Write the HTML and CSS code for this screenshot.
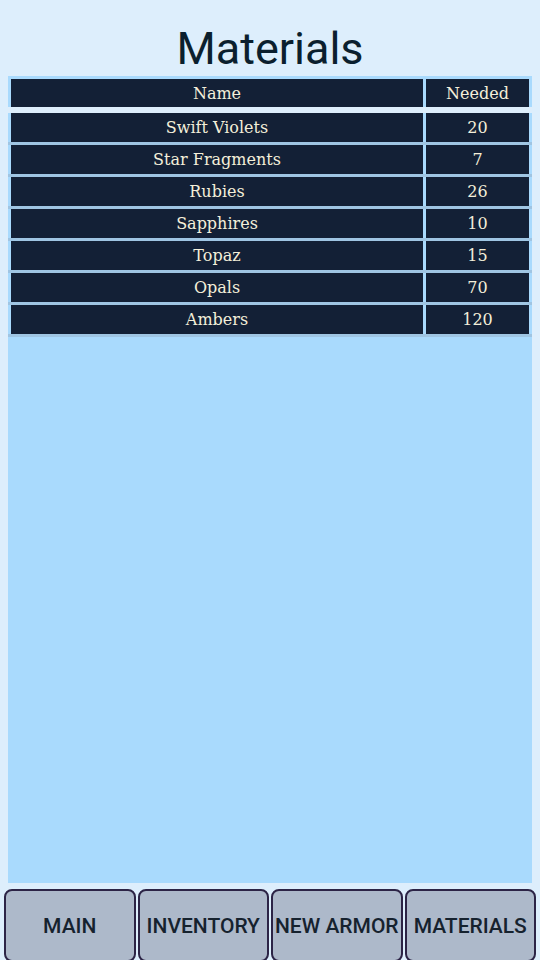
FILE: index.html
```html
<!DOCTYPE html>
<html lang="en">
<head>
    <meta charset="UTF-8">
    <meta name="viewport" content="width=device-width, initial-scale=1.0">
    <title>Materials</title>
    <link rel="stylesheet" href="styles.css">
</head>
<body>
    <div class="app">
        <h1 class="title">Materials</h1>
        <div class="table-head">
            <div class="cell">Name</div>
            <div class="cell">Needed</div>
        </div>
        <div class="table-body">
            <div class="row"><div class="cell">Swift Violets</div><div class="cell">20</div></div>
            <div class="row"><div class="cell">Star Fragments</div><div class="cell">7</div></div>
            <div class="row"><div class="cell">Rubies</div><div class="cell">26</div></div>
            <div class="row"><div class="cell">Sapphires</div><div class="cell">10</div></div>
            <div class="row"><div class="cell">Topaz</div><div class="cell">15</div></div>
            <div class="row"><div class="cell">Opals</div><div class="cell">70</div></div>
            <div class="row"><div class="cell">Ambers</div><div class="cell">120</div></div>
        </div>
        <div class="nav">
            <button class="nav-btn">MAIN</button>
            <button class="nav-btn">INVENTORY</button>
            <button class="nav-btn">NEW ARMOR</button>
            <button class="nav-btn">MATERIALS</button>
        </div>
    </div>
</body>
</html>
```

FILE: styles.css
```css
html, body {
    margin: 0;
    padding: 0;
    overflow: hidden;
}
body {
    background-color: #ddeefc;
    font-family: Roboto, "Noto Sans", sans-serif;
}
.app {
    height: 962px;
    display: flex;
    flex-direction: column;
}
.title {
    margin: 0;
    padding-top: 22px;
    font-size: 45px;
    font-weight: 400;
    line-height: 54px;
    text-align: center;
    color: #0b1f2e;
}
.table-head {
    margin: 0 8px 6px;
    padding: 3px 3px 0;
    background-color: #a9dafd;
    display: grid;
    grid-template-columns: 1fr 103px;
    column-gap: 3px;
}
.cell {
    height: 28px;
    line-height: 30px;
    background-color: #132036;
    color: #f4efda;
    text-align: center;
    font-family: "DejaVu Serif", "Liberation Serif", serif;
    font-size: 16px;
}
.table-body {
    flex: 1;
    margin: 0 8px;
    background-color: #a9dafd;
}
.row {
    padding: 0 3px;
    display: grid;
    grid-template-columns: 1fr 103px;
    column-gap: 3px;
    border-bottom: 3px solid #9fc5e3;
}
.row .cell {
    height: 29px;
    line-height: 30px;
}
.nav {
    margin-top: 6px;
    padding: 0 4px;
    display: flex;
    gap: 2px;
}
.nav-btn {
    flex: 1;
    height: 73px;
    padding: 0;
    background-color: #adb9ca;
    border: 2px solid #2c2446;
    border-radius: 8px;
    color: #16222e;
    font-family: Roboto, "Noto Sans", sans-serif;
    font-weight: 500;
    font-size: 21px;
    white-space: nowrap;
}
```
